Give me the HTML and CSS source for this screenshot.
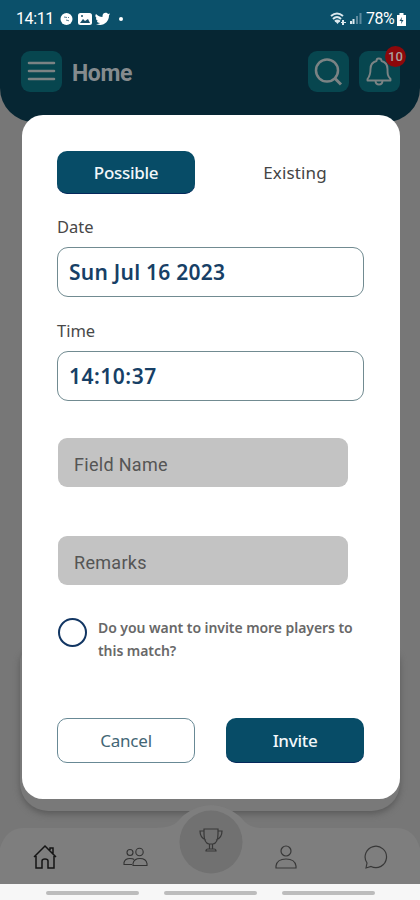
FILE: index.html
```
<!DOCTYPE html>
<html lang="en">
<head>
<meta charset="utf-8">
<title>Home</title>
<link rel="stylesheet" href="styles.css">
</head>
<body>
<div class="screen">
  <div class="status">
    <span class="clock">14:11</span>
    <svg class="notif" width="66" height="14" viewBox="0 0 66 14">
      <circle cx="6.5" cy="7" r="6" fill="#fff"/>
      <path d="M4 5l3 .5M6 8l3 .8M8 5l1 1" stroke="#547d91" fill="none"/>
      <rect x="18" y="1" width="14" height="12" rx="2.5" fill="#fff"/>
      <path d="M20 11l3-4 2 2 3-2 2 4z" fill="#174e67"/><circle cx="22" cy="4" r="1" fill="#174e67"/>
      <path d="M36 2c2 2 4 3 6.500 3C42 0 47 0 48 2l2-.6-1 2C49 10 43 15 36 12c2 0 3-.3 4-1-2 0-3-1-3-2h1c-2-1-2-2-2-3l1 .3c-2-1-2-3-1-4.300z" fill="#fff"/>
      <circle cx="61" cy="7" r="2" fill="#fff"/>
    </svg>
    <svg class="signal" width="32" height="14" viewBox="0 0 32 14">
      <path d="M1 4q6-5 12 0M3 7q4-4 8 0M5 9.500q2-2 5 0" fill="none" stroke="#dce9ef" stroke-width="2"/>
      <path d="M5 9h5l-2.500 3zM12 8h2v2h2v1h-2v2h-2v-2h-1v-1h1z" fill="#dce9ef"/>
      <path d="M21 12V9M23.500 12V7" stroke="#dce9ef" stroke-width="2"/>
      <path d="M27 12V4M30.500 12V1" stroke="#5e8a9e" stroke-width="2"/>
    </svg>
    <span class="percent">78%</span>
    <svg class="battery" width="9" height="13" viewBox="0 0 9 13"><path d="M2.500 0h4v2H9v11H0V2h2.500z" fill="#fff"/><path d="M5 4L2.500 8h2L4 11l2.500-4h-2z" fill="#174e67"/></svg>
  </div>
  <header class="top">
    <div class="tile">
      <svg width="40" height="40" viewBox="0 0 40 40"><path d="M8 12h25M8 20h25M8 28h25" stroke="#7b8384" stroke-width="2.600" stroke-linecap="round"/></svg>
    </div>
    <h1>Home</h1>
    <div class="tile">
      <svg width="40" height="40" viewBox="0 0 40 40" fill="none" stroke="#7b8384" stroke-width="2.500"><circle cx="19" cy="19.500" r="11"/><path d="M27 27.500l6 6" stroke-width="3"/></svg>
    </div>
    <div class="tile bell">
      <svg width="40" height="40" viewBox="0 0 40 40" fill="none" stroke="#7b8384" stroke-width="1.900" stroke-linejoin="round"><path d="M19.500 7.500q-2 0-2 2.500c-4 1-6 4-6 8 0 5-.5 7-3 10v1.500h23V28c-3-3-3-5-3-10 0-4-2-7-6-8q0-2.500-2.500-2.500zM16.500 29.500q0 4 3.500 4t3.500-4"/></svg>
      <span class="badge">10</span>
    </div>
  </header>
  <main class="content"><div class="card"></div></main>
  <nav class="tabs">
    <svg class="tabshape" width="420" height="79" viewBox="0 0 420 79"><path d="M0 79V43Q6 23 24 23H150C177 23 176 17 184 10Q211-10 238 10C246 17 247 23 264 23H396Q414 23 420 43V79z" fill="#7e7e7e"/><circle cx="211" cy="37" r="31.500" fill="#717171"/></svg>
    <svg class="tab" width="24" height="26" viewBox="0 0 24 26" fill="none" stroke="#151515" stroke-width="1.500"><path d="M1 14L12 3l11 11M3 13v12h6v-7q0-2 3-2t3 2v7h6V13M17 7V5h3v6"/></svg>
    <svg class="tab people" width="26" height="26" viewBox="0 0 26 26" fill="none" stroke="#333" stroke-width="1.100"><circle cx="8" cy="9.500" r="3"/><circle cx="17.500" cy="9" r="3.700"/><path d="M10 21.500H2v-2q1-4 6-4 3 0 4 1M11 22.500v-2q1-5 7-5t7 5v2z"/></svg>
    <svg class="tab trophy" width="26" height="26" viewBox="0 0 26 26" fill="none" stroke="#383838" stroke-width="1.200"><path d="M6 2h14v5q0 9-5 10h-4Q6 16 6 7zM6 4H2q0 7 6 9M20 4h4q0 7-6 9M11.500 17v5M14.500 17v5M8 24q0-2 2-2h6q2 0 2 2z"/></svg>
    <svg class="tab" width="24" height="26" viewBox="0 0 24 26" fill="none" stroke="#383838" stroke-width="1.200"><circle cx="12" cy="8" r="5"/><path d="M2 25v-2q1-7 10-7t10 7v2z"/></svg>
    <svg class="tab" width="24" height="26" viewBox="0 0 24 26" fill="none" stroke="#383838" stroke-width="1.200"><path d="M2 25l1-5A10.700 10.700 0 1 1 7 23.500z"/></svg>
  </nav>
  <div class="system"><i></i><i></i><i></i></div>

  <section class="modal">
    <div class="pair">
      <div class="btn solid possible"><span>Possible</span></div>
      <div class="btn"><span class="existing">Existing</span></div>
    </div>
    <div class="label date-label">Date</div>
    <div class="field"><span class="date">Sun Jul 16 2023</span></div>
    <div class="label time-label">Time</div>
    <div class="field"><span class="time">14:10:37</span></div>
    <div class="input">Field Name</div>
    <div class="input remarks">Remarks</div>
    <div class="ask">
      <span class="radio"></span>
      <p>Do you want to invite more players to<br>this match?</p>
    </div>
    <div class="pair actions">
      <div class="btn outline"><span>Cancel</span></div>
      <div class="btn solid"><span>Invite</span></div>
    </div>
  </section>
</div>
</body>
</html>
```
FILE: styles.css
```
* { box-sizing: border-box; }
body { margin: 0; font-family: "Noto Sans", sans-serif; }
svg { display: block; flex: none; }
.screen { position: relative; width: 420px; height: 900px; overflow: hidden; background: #777; display: flex; flex-direction: column; }
.status { height: 30px; flex: none; background: #0b506a; display: flex; align-items: center; padding: 8px 14px 0 16px; color: #fff; font: 400 16px/20px Roboto, sans-serif; }
.clock { width: 44px; letter-spacing: -.4px; }
.signal { margin-left: auto; }
.percent { margin-left: 4px; width: 30px; letter-spacing: -.5px; }
.battery { margin-left: 1px; }
.top { height: 92px; flex: none; background: #062633; border-radius: 0 0 34px 34px; display: flex; align-items: flex-start; padding: 21px 20px 0 21px; }
.tile { width: 41px; height: 41px; border-radius: 9px; background: #07464f; position: relative; }
.top h1 { margin: 0 auto 0 10px; font: 700 23px/45px Roboto, sans-serif; letter-spacing: -.4px; color: #858b8e; }
.bell { margin-left: 10px; }
.badge { position: absolute; left: 26px; top: -5px; width: 21px; height: 21px; border-radius: 50%; background: #8d080b; color: #aaa09f; font: 500 13px/22px Roboto, sans-serif; text-align: center; }
.content { flex: 1; padding: 0 20px; min-height: 0; }
.card { height: 161px; margin-top: 528px; border-radius: 10px 10px 28px 28px; background: #797979; box-shadow: 0 3px 6px #5b5b5b; }
.tabs { position: relative; height: 79px; flex: none; display: grid; grid-template-columns: 90px 90px 61px 90px 89px; justify-items: center; align-items: start; padding-top: 38px; }
.tabshape { position: absolute; left: 0; top: 0; }
.tab { position: relative; }
.trophy { top: -16px; }
.system { height: 16px; flex: none; background: #f7f7f7; display: flex; justify-content: center; gap: 25px; padding-top: 7px; }
.system i { width: 93px; height: 4px; border-radius: 2px; background: #bcbcbc; }
.modal { position: absolute; left: 22px; top: 115px; width: 377.500px; height: 684px; background: #fff; border-radius: 21px; padding: 36px 35px; }
.pair { display: flex; gap: 31px; }
.btn { width: 138px; flex: none; height: 43px; border-radius: 10px; display: flex; align-items: center; justify-content: center; font-size: 17px; color: #444; }
.existing { letter-spacing: .15px; }
.solid { background: #074c67; color: #f2f7fa; border-bottom: 1px solid #05285b; font-weight: 500; letter-spacing: -.3px; }
.outline { border: 1px solid #688995; color: #426675; letter-spacing: -.2px; }
.label { font-size: 16.500px; line-height: 22px; color: #484848; }
.date-label { margin-top: 22px; }
.time-label { margin-top: 23px; }
.field { width: 307px; margin-top: 9px; height: 50px; border: 1px solid #718b91; border-radius: 11px; padding-left: 11px; font-size: 21px; line-height: 48px; font-weight: 600; color: #173f66; }
.field span { white-space: nowrap; letter-spacing: .25px; }
.field .time { letter-spacing: .5px; }
.input { width: 290px; height: 49px; margin: 37px 0 0 1px; background: #c3c3c3; border-radius: 9px; padding-left: 16px; font: 18px/53px Roboto, sans-serif; letter-spacing: .3px; color: #555; }
.remarks { margin-top: 49px; }
.ask { height: 50px; margin-top: 32px; display: flex; }
.radio { width: 29px; height: 29px; margin: 1px 11px 0 1px; border: 2px solid #123663; border-radius: 50%; flex: none; }
.ask p { margin: 0; font-size: 14px; line-height: 22.500px; font-weight: 600; letter-spacing: -.06px; color: #686868; white-space: nowrap; }
.actions { margin-top: 51px; }
.actions .btn { height: 45px; }
```
